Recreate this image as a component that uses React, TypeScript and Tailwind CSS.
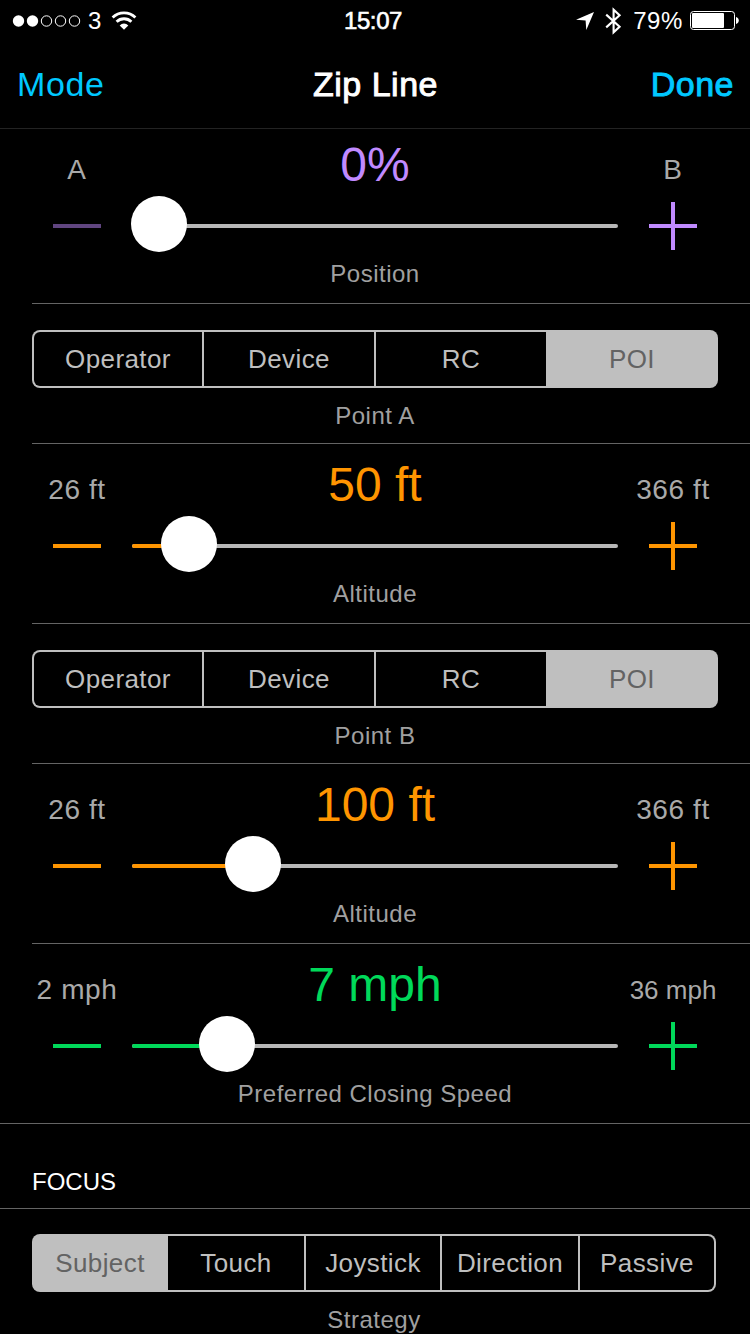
import React from 'react';
import clsx from 'clsx';

const SignalDots: React.FC = () => (
    <svg width="70" height="14" viewBox="0 0 70 14" className="block">
        <circle cx="7.500" cy="7" r="5.7" fill="#fff" />
        <circle cx="21.500" cy="7" r="5.7" fill="#fff" />
        <circle cx="35.500" cy="7" r="5.2" fill="none" stroke="#fff" />
        <circle cx="49.500" cy="7" r="5.2" fill="none" stroke="#fff" />
        <circle cx="63.500" cy="7" r="5.2" fill="none" stroke="#fff" />
    </svg>
);

const WifiIcon: React.FC = () => (
    <svg width="26" height="20" viewBox="0 0 26 20" className="block" fill="none" stroke="#fff" strokeWidth="2.8">
        <path d="M1.6 6.6a16.2 16.2 0 0 1 22.8 0" />
        <path d="M5.6 10.8a10.5 10.5 0 0 1 14.8 0" />
        <path d="M13 18.800l-4.300-4.400a6 6 0 0 1 8.600 0z" fill="#fff" stroke="none" />
    </svg>
);

const LocationIcon: React.FC = () => (
    <svg width="18" height="18" viewBox="0 0 18 18" className="block">
        <path d="M18 0L10.3 18L9.6 8.6L0 7.8z" fill="#fff" />
    </svg>
);

const BluetoothIcon: React.FC = () => (
    <svg width="17" height="28" viewBox="0 0 17 28" className="block" fill="none" stroke="#fff" strokeWidth="2.1">
        <path d="M1.2 7.600L14.600 19.700L8.600 25.300V2.700L14.600 8.300L1.200 20.400" />
    </svg>
);

const BatteryIcon: React.FC = () => (
    <svg width="49" height="19" viewBox="0 0 49 19" className="block">
        <rect x="0.5" y="0.5" width="44" height="18" rx="3" fill="none" stroke="#fff" />
        <rect x="2" y="2" width="32" height="15" rx="1" fill="#fff" />
        <path d="M46 6c1.6.4 2.8 1.8 2.8 3.5S47.6 12.6 46 13z" fill="#fff" />
    </svg>
);

interface SliderRowProps {
    min: string;
    max: string;
    value: string;
    caption: string;
    // distance of the thumb centre from the start of the track
    offset: number;
    color: string;
    fill: string;
    atMin?: boolean;
    fullLine?: boolean;
    smallMax?: boolean;
}

const SliderRow: React.FC<SliderRowProps> = ({ min, max, value, caption, offset, color, fill, atMin, fullLine, smallMax }) => (
    <section className="h-[180px] flex flex-col">
        <div className="h-[74px] pl-[22px] grid grid-cols-[110px_486px_110px] text-center whitespace-nowrap text-[#a9a9a9]">
            <span className="pt-8 text-[28px] leading-[28px] tracking-[0.6px]">{min}</span>
            <span className={clsx('pt-[17px] text-[48px] leading-[48px]', color)}>{value}</span>
            <span className={clsx('pt-8 leading-[28px]', smallMax ? 'text-[26px]' : 'text-[28px] tracking-[0.6px]')}>{max}</span>
        </div>
        <div className="h-14 pl-[22px] grid grid-cols-[110px_486px_110px] items-center">
            <button aria-label="Decrease" className={clsx('w-12 h-1 justify-self-center', fill, atMin && 'opacity-50')} />
            <div className="relative h-1 rounded-full bg-[#b7b7b7]">
                <div className={clsx('h-1 rounded-full', fill)} style={{ width: offset }} />
                <div
                    className="absolute top-1/2 w-14 h-14 -mt-[30px] -ml-7 rounded-full bg-white"
                    style={{ left: offset }}
                />
            </div>
            <button aria-label="Increase" className="w-12 h-12 justify-self-center grid place-items-center">
                <span className={clsx('col-start-1 row-start-1 w-12 h-1', fill)} />
                <span className={clsx('col-start-1 row-start-1 w-1 h-12', fill)} />
            </button>
        </div>
        <p className="flex-1 pt-2 text-center text-[24px] leading-[24px] tracking-[0.5px] text-[#a0a0a0]">{caption}</p>
        <div className={clsx('h-px bg-[#646464]', !fullLine && 'ml-8')} />
    </section>
);

interface SegmentedProps {
    items: string[];
    selected: number;
    columns: string;
}

// The container colour shows through the padding and gaps as the outline
const Segmented: React.FC<SegmentedProps> = ({ items, selected, columns }) => (
    <div className={clsx('h-[58px] grid gap-0.5 p-0.5 rounded-lg bg-[#bfbfbf] text-[26px] leading-[54px] text-center whitespace-nowrap', columns)}>
        {items.map((item, i) => (
            <button
                key={item}
                className={clsx(
                    'tracking-[0.4px] first:rounded-l-md last:rounded-r-md',
                    i === selected ? 'text-[#636363]' : 'bg-black text-[#bfbfbf]'
                )}
            >
                {item}
            </button>
        ))}
    </div>
);

const PointRow: React.FC<{ caption: string }> = ({ caption }) => (
    <section className="h-[140px] pl-8 flex flex-col">
        <div className="pt-[26px] pr-8">
            <Segmented
                items={['Operator', 'Device', 'RC', 'POI']}
                selected={3}
                columns="grid-cols-[168px_170px_170px_168px]"
            />
        </div>
        <p className="flex-1 pt-4 pr-8 text-center text-[24px] leading-[24px] tracking-[0.5px] text-[#a0a0a0]">{caption}</p>
        <div className="h-px bg-[#646464]" />
    </section>
);

const App: React.FC = () => (
    <div className="w-[750px] h-[1334px] overflow-hidden bg-black text-white font-['Liberation_Sans',Arial,sans-serif]">
        <header className="h-[129px] border-b border-[#232323]">
            <div className="h-10 pt-px pl-[11px] pr-[11px] grid grid-cols-[1fr_auto_1fr] items-center text-[24px] leading-[38px]">
                <div className="flex items-center">
                    <SignalDots />
                    <span className="ml-[7px]">3</span>
                    <span className="ml-[10px]"><WifiIcon /></span>
                </div>
                <span className="-ml-1 tracking-[-0.4px] [-webkit-text-stroke:0.6px]">15:07</span>
                <div className="flex items-center justify-end">
                    <LocationIcon />
                    <span className="ml-[11px]"><BluetoothIcon /></span>
                    <span className="ml-[11px] tracking-[0.6px]">79%</span>
                    <span className="ml-[7px]"><BatteryIcon /></span>
                </div>
            </div>
            <nav className="h-[88px] pl-[17px] pr-[16px] grid grid-cols-[1fr_auto_1fr] items-center text-[34px] leading-[88px]">
                <button className="text-left tracking-[0.6px] text-[#00c8ff]">Mode</button>
                <h1 className="tracking-[0.5px] [-webkit-text-stroke:0.9px]">Zip Line</h1>
                <button className="text-right tracking-[0.5px] text-[#00c8ff] [-webkit-text-stroke:0.9px]">Done</button>
            </nav>
        </header>

        <main className="-mt-[5px]">
            <SliderRow min="A" max="B" value="0%" caption="Position" offset={27} color="text-[#c08aff]" fill="bg-[#c08aff]" atMin />
            <PointRow caption="Point A" />
            <SliderRow min="26 ft" max="366 ft" value="50 ft" caption="Altitude" offset={57} color="text-[#ff9500]" fill="bg-[#ff9500]" />
            <PointRow caption="Point B" />
            <SliderRow min="26 ft" max="366 ft" value="100 ft" caption="Altitude" offset={121} color="text-[#ff9500]" fill="bg-[#ff9500]" />
            <SliderRow min="2 mph" max="36 mph" value="7 mph" caption="Preferred Closing Speed" offset={95} color="text-[#00d95a]" fill="bg-[#00d95a]" fullLine smallMax />

            <h2 className="h-[84px] pl-8 pt-[46px] text-[24px] leading-[24px]">FOCUS</h2>
            <div className="h-px bg-[#646464]" />
            <section className="pt-[25px] pl-8 pr-[34px]">
                <Segmented
                    items={['Subject', 'Touch', 'Joystick', 'Direction', 'Passive']}
                    selected={0}
                    columns="grid-cols-[132px_136px_134px_136px_134px]"
                />
                <p className="pt-4 text-center text-[24px] leading-[24px] tracking-[0.5px] text-[#a0a0a0]">Strategy</p>
            </section>
        </main>
    </div>
);

export default App;
